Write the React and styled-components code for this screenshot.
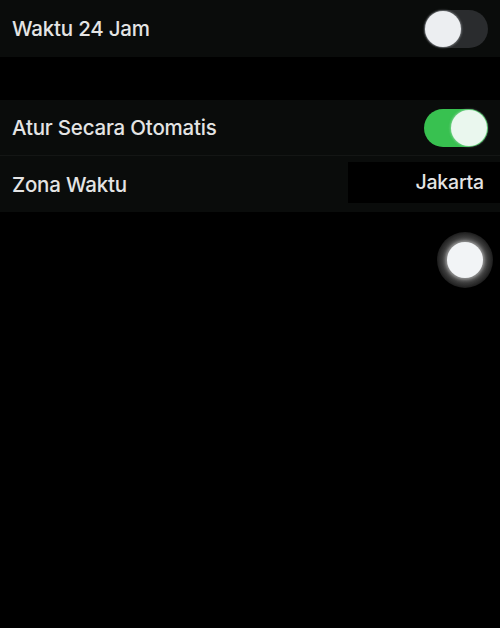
import React from "react";
import styled, { createGlobalStyle } from "styled-components";

const Global = createGlobalStyle`
  html, body { margin: 0; padding: 0; background: #000; }
  body { font-family: Inter, "Noto Sans", sans-serif; }
`;

const Page = styled.div`
  position: relative;
  width: 500px;
  height: 628px;
  background: #000;
  overflow: hidden;
  display: flex;
  flex-direction: column;
`;

const Group = styled.div`
  background: #0a0c0b;
  display: flex;
  flex-direction: column;
  margin-top: ${(p) => p.$gap || 0}px;
`;

const Row = styled.div`
  height: ${(p) => p.$h || 56}px;
  display: flex;
  align-items: center;
  justify-content: space-between;
  padding: 0 12px;
  border-top: ${(p) => (p.$divider ? "1px solid #141615" : "none")};
`;

const Label = styled.span`
  color: #e4e4e4;
  font-size: 20.5px;
  font-weight: 500;
  letter-spacing: -0.2px;
`;

const Track = styled.div`
  width: 64px;
  height: 38px;
  border-radius: 19px;
  background: ${(p) => (p.$on ? "#38c150" : "#2a2c2e")};
  display: flex;
  align-items: center;
  justify-content: ${(p) => (p.$on ? "flex-end" : "flex-start")};
  padding: 1px;
  box-sizing: border-box;
`;

const Knob = styled.div`
  width: 36px;
  height: 36px;
  border-radius: 50%;
  background: ${(p) => (p.$on ? "#eaf7ee" : "#eceef1")};
  box-shadow: 0 0 2px 1px rgba(230, 235, 240, 0.35);
`;

const ValueBox = styled.div`
  background: #000;
  width: 152px;
  height: 41px;
  margin-right: -12px;
  display: flex;
  align-items: center;
  justify-content: flex-end;
  padding-right: 16px;
  box-sizing: border-box;
  color: #e4e4e4;
  font-size: 19.5px;
  font-weight: 500;
  letter-spacing: -0.2px;
  margin-top: -4px;
`;

const Assistive = styled.div`
  position: absolute;
  left: 437px;
  top: 232px;
  width: 56px;
  height: 56px;
  border-radius: 50%;
  background: radial-gradient(circle, rgba(120,120,120,0.55) 55%, rgba(60,60,60,0.3) 75%, rgba(0,0,0,0) 100%);
  display: flex;
  align-items: center;
  justify-content: center;
`;

const AssistiveCore = styled.div`
  width: 36px;
  height: 36px;
  border-radius: 50%;
  background: #f2f4f6;
  box-shadow: 0 0 3px 2px rgba(200,200,200,0.6);
`;

export default function App() {
  return (
    <Page>
      <Global />
      <Group>
        <Row $h={57}>
          <Label>Waktu 24 Jam</Label>
          <Track>
            <Knob />
          </Track>
        </Row>
      </Group>
      <Group $gap={43}>
        <Row $h={55}>
          <Label>Atur Secara Otomatis</Label>
          <Track $on>
            <Knob $on />
          </Track>
        </Row>
        <Row $h={56} $divider>
          <Label>Zona Waktu</Label>
          <ValueBox>Jakarta</ValueBox>
        </Row>
      </Group>
      <Assistive>
        <AssistiveCore />
      </Assistive>
    </Page>
  );
}
